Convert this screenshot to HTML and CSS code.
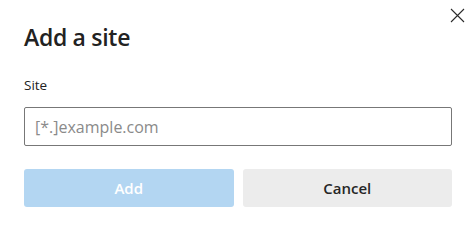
FILE: index.html
```html
<!DOCTYPE html>
<html lang="en">
<head>
  <meta charset="UTF-8" />
  <title>Add a site</title>
  <link rel="stylesheet" href="styles.css">
</head>
<body>
  <div class="dialog">
    <button class="close-btn" title="Close">
      <svg width="15" height="15" viewBox="0 0 15 15"><path d="M1 1 L14 14 M14 1 L1 14" stroke="#2b2b2b" stroke-width="1.1" fill="none"/></svg>
    </button>

    <h1 class="title">Add a site</h1>

    <label class="field-label" for="site">Site</label>
    <input id="site" class="site-input" type="text" placeholder="[*.]example.com">

    <div class="actions">
      <button class="btn btn-add" disabled>Add</button>
      <button class="btn btn-cancel">Cancel</button>
    </div>
  </div>
</body>
</html>
```

FILE: styles.css
```css
* { box-sizing: border-box; margin: 0; padding: 0; }
body {
  background: #fff;
  font-family: 'Open Sans', 'Noto Sans', sans-serif;
  color: #1b1b1b;
}
.dialog {
  position: relative;
  width: 474px; height: 228px;
  padding: 22px 22px 0 24px;
  display: flex; flex-direction: column;
}
.close-btn {
  position: absolute; top: 8px; right: 9px;
  width: 15px; height: 15px;
  border: none; background: none;
  display: flex;
}
.title {
  font-size: 23px; font-weight: 600;
  line-height: 30px;
  letter-spacing: -0.3px;
  color: #222;
}
.field-label {
  margin-top: 24px;
  font-size: 13.5px; line-height: 18px;
  color: #222;
}
.site-input {
  margin-top: 13px;
  width: 428px; height: 39px;
  border: 1.5px solid #777;
  border-radius: 2px;
  padding: 0 10px;
  font-family: inherit; font-size: 16px;
  color: #222;
  outline: none;
}
.site-input::placeholder { color: #8a8a8a; }
.actions {
  margin-top: 23px;
  display: flex; gap: 9px;
  width: 428px;
}
.btn {
  flex: 1;
  height: 38px;
  border: none; border-radius: 3px;
  font-family: inherit; font-size: 15px; font-weight: 600;
}
.btn-add {
  background: #b3d6f2;
  color: #fff;
}
.btn-cancel {
  background: #ececec;
  color: #262626;
}
```
